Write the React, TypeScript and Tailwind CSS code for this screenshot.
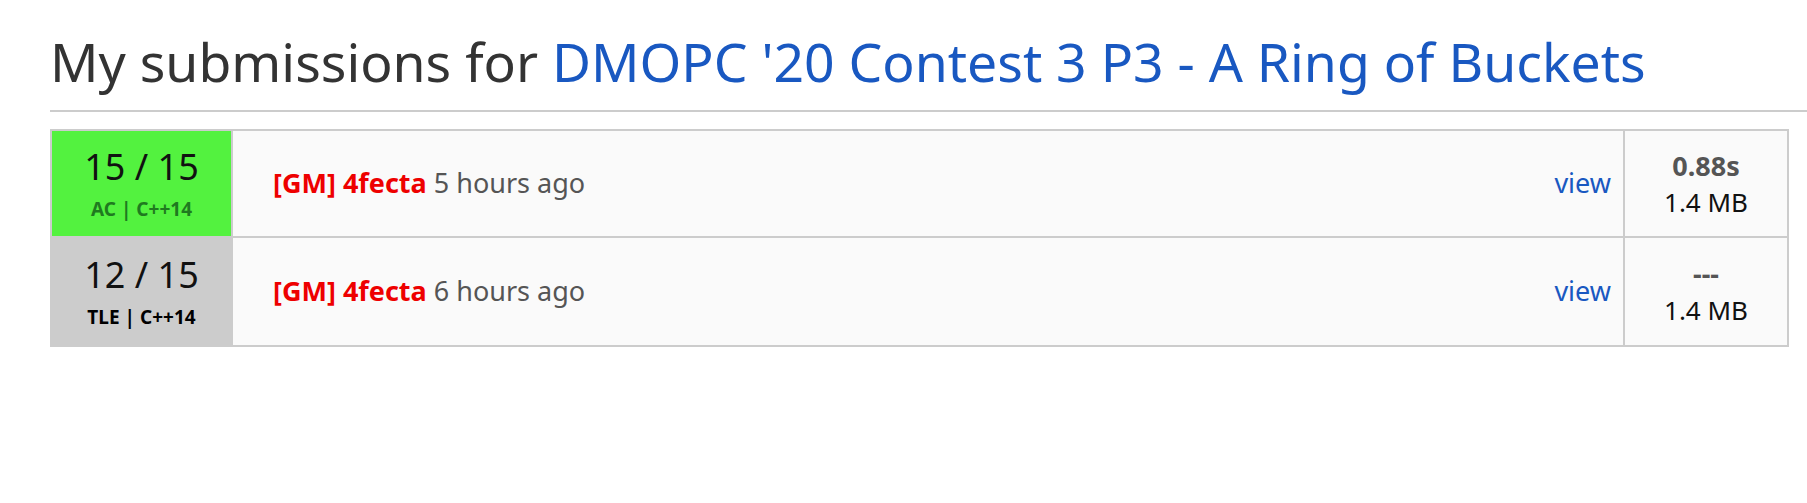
import React from "react";

type Submission = {
  points: string;
  status: string;
  lang: string;
  ago: string;
  time: string;
  memory: string;
};

const submissions: Submission[] = [
  { points: "15 / 15", status: "AC", lang: "C++14", ago: "5 hours ago", time: "0.88s", memory: "1.4 MB" },
  { points: "12 / 15", status: "TLE", lang: "C++14", ago: "6 hours ago", time: "---", memory: "1.4 MB" },
];

const Row = ({ sub, last }: { sub: Submission; last: boolean }) => {
  const ac = sub.status === "AC";
  return (
    <div className={`flex h-[107px] ${last ? "" : "border-b-2 border-[#ccc]"}`}>
      <div
        className={`w-[181px] shrink-0 flex flex-col items-center justify-center border-r-2 border-[#ccc] ${
          ac ? "bg-[#53f23f]" : "bg-[#ccc]"
        }`}
      >
        <div className="text-[36px] leading-[40px] text-[#111]">{sub.points}</div>
        <div className={`text-[19px] font-bold leading-[24px] mt-[10px] ${ac ? "text-[#1f7a1f]" : "text-black"}`}>
          {sub.status} | {sub.lang}
        </div>
      </div>
      <div className="flex-1 flex items-center justify-between bg-[#fafafa] pl-[40px] pr-[12px] border-r-2 border-[#ccc]">
        <div className="text-[27px]">
          <span className="font-bold text-[#e00]">[GM] 4fecta</span>{" "}
          <span className="text-[#555]">{sub.ago}</span>
        </div>
        <a className="text-[27px] text-[#1958c1]">view</a>
      </div>
      <div className="w-[162px] shrink-0 flex flex-col items-center justify-center bg-[#fafafa] leading-[36px]">
        <div className="text-[27px] font-bold text-[#555]">{sub.time}</div>
        <div className="text-[26px] text-[#111]">{sub.memory}</div>
      </div>
    </div>
  );
};

export default function App() {
  return (
    <div className="min-h-screen bg-white pl-[50px] pt-[22px] font-['Noto_Sans',sans-serif]">
      <h2 className="text-[53.5px] leading-[80px] text-[#333] pb-[8px] border-b-2 border-[#ccc]">
        My submissions for <a className="text-[#1958c1]">DMOPC '20 Contest 3 P3 - A Ring of Buckets</a>
      </h2>
      <div className="mt-[17px] mr-[18px] border-2 border-[#ccc]">
        {submissions.map((s, i) => (
          <Row key={i} sub={s} last={i === submissions.length - 1} />
        ))}
      </div>
    </div>
  );
}
